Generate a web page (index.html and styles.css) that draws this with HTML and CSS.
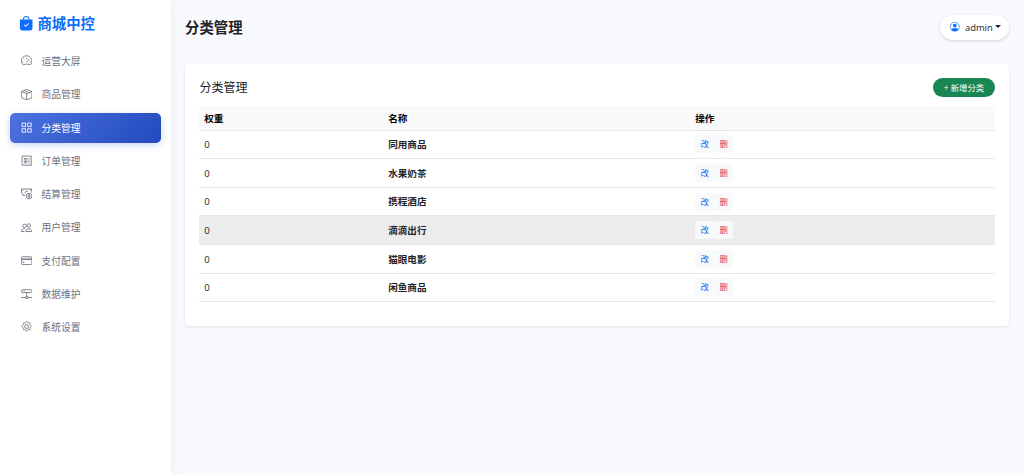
FILE: index.html
```html
<!DOCTYPE html>
<html lang="zh-CN">
<head>
    <meta charset="UTF-8">
    <meta name="viewport" content="width=device-width, initial-scale=1.0">
    <title>分类管理</title>
    <link rel="stylesheet" href="styles.css">
</head>
<body>
    <nav class="sidebar">
        <div class="brand">
            <svg class="brand-icon" viewBox="0 0 16 16" fill="currentColor"><path fill-rule="evenodd" d="M10.5 3.5a2.5 2.5 0 0 0-5 0V4h5v-.5zm1 0V4H15v10a2 2 0 0 1-2 2H3a2 2 0 0 1-2-2V4h3.500v-.5a3.500 3.500 0 1 1 7 0zm-.646 5.354a.5.5 0 0 0-.708-.708L7.500 10.793 6.354 9.646a.5.5 0 1 0-.708.708l1.500 1.500a.5.5 0 0 0 .708 0l3-3z"/></svg>
            <span>商城中控</span>
        </div>
        <a class="nav-link" href="#">
            <svg class="icon" viewBox="0 0 16 16"><path d="M2.300 13.400a7.500 7.500 0 1 1 11.400 0c-.5.600-1.200.400-2 .1-2.400-.8-5-.8-7.400 0-.8.300-1.500.500-2-.1zM8 4v2M3.700 5.700l1 1M2 10h1.600M12.400 10H14M7.700 10.200l4.200-4.500"/></svg>
            <span>运营大屏</span>
        </a>
        <a class="nav-link" href="#">
            <svg class="icon" viewBox="0 0 16 16"><path d="M8 .6l7.500 3v8.800L8 15.400l-7.500-3V3.600zM.5 3.600L8 6.600l7.500-3M8 6.600v8.800M4.200 2.100l7.500 3"/></svg>
            <span>商品管理</span>
        </a>
        <a class="nav-link active" href="#">
            <svg class="icon" viewBox="0 0 16 16"><path d="M1.500 1.500h5v5h-5zM9.500 1.500h5v5h-5zM1.500 9.500h5v5h-5zM9.500 9.500h5v5h-5z"/></svg>
            <span>分类管理</span>
        </a>
        <a class="nav-link" href="#">
            <svg class="icon" viewBox="0 0 16 16"><path d="M1.500 1.500h13v13h-13zM4 5h5M4 7h5M4 9h5M4 11h5M10.500 5h1.500M10.500 7h1.500M10.500 9h1.500M10.500 11h1.500"/></svg>
            <span>订单管理</span>
        </a>
        <a class="nav-link" href="#">
            <svg class="icon" viewBox="0 0 16 16"><path d="M6 10.500H2.500V9a2 2 0 0 0-2-2V1.500h15V7M.5 4a2 2 0 0 0 2-2M13.500 2a2 2 0 0 0 2 2M9.700 5.300A2 2 0 1 0 6.300 7.500"/><circle cx="11.500" cy="11.500" r="4"/><path d="M12.800 10.200c-.4-1-2.500-.8-2.500.2s2.600.8 2.600 2c0 1.100-2.400 1.200-2.800.1M11.500 8.800v5.400"/></svg>
            <span>结算管理</span>
        </a>
        <a class="nav-link" href="#">
            <svg class="icon" viewBox="0 0 16 16"><circle cx="11" cy="5" r="2.500"/><circle cx="5" cy="5.500" r="2.500"/><path d="M6.500 13.500c0-2 1.500-4 4.500-4s4.500 2 4.500 4zM5.500 9.500c-3 0-5 1.500-5 4h4"/></svg>
            <span>用户管理</span>
        </a>
        <a class="nav-link" href="#">
            <svg class="icon" viewBox="0 0 16 16"><rect x=".5" y="2.500" width="15" height="11" rx="1.500"/><path d="M.5 5.500h15M.5 6.500h15"/><path d="M2.500 10h2M2.500 10.800h2"/></svg>
            <span>支付配置</span>
        </a>
        <a class="nav-link" href="#">
            <svg class="icon" viewBox="0 0 16 16"><rect x=".5" y="2.500" width="15" height="4" rx="1.500"/><path d="M2.500 4.500h1M4.800 4.500h1M8 6.500V12M0 13.500h6.500M9.500 13.500H16"/><rect x="6.500" y="12" width="3" height="3" rx=".5"/></svg>
            <span>数据维护</span>
        </a>
        <a class="nav-link" href="#">
            <svg class="icon" viewBox="0 0 16 16"><circle cx="8" cy="8" r="2.700"/><path d="M6.900 1.600c.3-1.100 1.900-1.100 2.200 0 .2.900 1.200 1.300 2 .8 1-.5 2.100.6 1.600 1.600-.5.800-.1 1.800.8 2.100 1.300.5 1.300 2.300 0 2.800-.9.300-1.300 1.300-.8 2.100.5 1-.6 2.100-1.600 1.600-.8-.5-1.800-.1-2 .8-.3 1.300-1.900 1.300-2.200 0-.2-.9-1.200-1.300-2-.8-1 .5-2.100-.6-1.600-1.600.5-.8.1-1.800-.8-2.100-1.300-.5-1.300-2.300 0-2.800.9-.3 1.300-1.300.8-2.100-.5-1 .6-2.100 1.600-1.600.8.500 1.800.1 2-.8z"/></svg>
            <span>系统设置</span>
        </a>
    </nav>

    <main class="content">
        <header class="topbar">
            <h1>分类管理</h1>
            <button class="user-menu">
                <svg class="user-icon" viewBox="0 0 16 16" fill="currentColor"><path d="M11 6a3 3 0 1 1-6 0 3 3 0 0 1 6 0z"/><path fill-rule="evenodd" d="M0 8a8 8 0 1 1 16 0A8 8 0 0 1 0 8zm8-7a7 7 0 0 0-5.468 11.370C3.242 11.226 4.805 10 8 10s4.757 1.225 5.468 2.370A7 7 0 0 0 8 1z"/></svg>
                <span>admin</span>
                <span class="caret"></span>
            </button>
        </header>

        <section class="card">
            <div class="card-head">
                <h2>分类管理</h2>
                <button class="btn-add">+ 新增分类</button>
            </div>
            <table>
                <thead>
                    <tr><th class="col-weight">权重</th><th class="col-name">名称</th><th>操作</th></tr>
                </thead>
                <tbody>
                    <tr><td>0</td><td class="name">同用商品</td><td class="ops"><div class="actions"><button class="edit">改</button><button class="delete">删</button></div></td></tr>
                    <tr><td>0</td><td class="name">水果奶茶</td><td class="ops"><div class="actions"><button class="edit">改</button><button class="delete">删</button></div></td></tr>
                    <tr><td>0</td><td class="name">携程酒店</td><td class="ops"><div class="actions"><button class="edit">改</button><button class="delete">删</button></div></td></tr>
                    <tr class="hovered"><td>0</td><td class="name">滴滴出行</td><td class="ops"><div class="actions"><button class="edit">改</button><button class="delete">删</button></div></td></tr>
                    <tr><td>0</td><td class="name">猫眼电影</td><td class="ops"><div class="actions"><button class="edit">改</button><button class="delete">删</button></div></td></tr>
                    <tr><td>0</td><td class="name">闲鱼商品</td><td class="ops"><div class="actions"><button class="edit">改</button><button class="delete">删</button></div></td></tr>
                </tbody>
            </table>
        </section>
    </main>
</body>
</html>
```
FILE: styles.css
```css
* {
    box-sizing: border-box;
}
body {
    margin: 0;
    display: flex;
    height: 100vh;
    background-color: #f8f9fc;
    color: #212529;
    font-family: "Open Sans", "Noto Sans CJK SC", sans-serif;
    font-size: 9.6px;
    line-height: 1.5;
}
button {
    font-family: inherit;
    border: none;
    cursor: pointer;
}
.sidebar {
    width: 171px;
    flex: none;
    padding: 13px 10px 0;
    background-color: #fff;
    box-shadow: 0 0 10px rgba(58,59,69,0.08);
}
.brand {
    display: flex;
    align-items: center;
    gap: 4px;
    height: 22px;
    margin-bottom: 11.5px;
    padding-left: 9px;
    color: #0d6efd;
    font-size: 14.4px;
    font-weight: 700;
}
.brand-icon {
    width: 14.4px;
    height: 14.4px;
    margin-bottom: 1px;
}
.nav-link {
    display: flex;
    align-items: center;
    gap: 9px;
    height: 30px;
    margin-bottom: 3.25px;
    padding-left: 11.2px;
    border-radius: 5px;
    color: #6e707e;
    font-size: 9.75px;
    text-decoration: none;
}
.nav-link span {
    padding-top: 2px;
}
.nav-link.active {
    background: linear-gradient(135deg, #4e73df 0%, #224abe 100%);
    box-shadow: 0 2px 6px rgba(78,115,223,0.3);
    color: #fff;
}
.icon {
    width: 11.3px;
    height: 11.3px;
    margin-bottom: 1px;
    fill: none;
    stroke: currentColor;
    stroke-width: 1.2;
}
.content {
    flex: 1;
    padding: 14px 14.6px 0 14px;
}
.topbar {
    display: flex;
    justify-content: space-between;
    align-items: center;
    height: 26px;
    margin-bottom: 24px;
}
h1 {
    margin: 0;
    padding-top: 2px;
    font-size: 14.4px;
    font-weight: 700;
}
.user-menu {
    display: flex;
    align-items: center;
    width: 69px;
    height: 25px;
    padding: 0 10px;
    border-radius: 13px;
    background-color: #fff;
    box-shadow: 0 1px 3px rgba(0,0,0,0.16);
    color: #212529;
    font-size: 9.4px;
}
.user-icon {
    width: 9.6px;
    height: 9.6px;
    margin-right: 5px;
    color: #0d6efd;
    flex: none;
}
.caret {
    margin-left: 2.5px;
    margin-bottom: 2px;
    border-top: 3px solid;
    border-left: 3px solid transparent;
    border-right: 3px solid transparent;
}
.card {
    height: 262px;
    padding: 14px 14.4px;
    border-radius: 4px;
    background-color: #fff;
    box-shadow: 0 1px 3px rgba(0,0,0,0.1);
}
.card-head {
    display: flex;
    justify-content: space-between;
    align-items: center;
    height: 19px;
    margin-bottom: 9px;
}
h2 {
    margin: 0;
    font-size: 12px;
    font-weight: 400;
}
.btn-add {
    width: 62px;
    height: 19px;
    padding: 0 0 1px;
    border-radius: 10px;
    background-color: #198754;
    color: #fff;
    font-size: 8.4px;
}
table {
    width: 100%;
    border-collapse: separate;
    border-spacing: 0;
    table-layout: fixed;
}
th,
td {
    height: 28.6px;
    padding: 2px 4.8px 0;
    border-bottom: 1px solid #e5e7e9;
    text-align: left;
    vertical-align: middle;
}
th {
    height: 24.6px;
    background-color: #f8f9fa;
    color: #000;
    font-weight: 700;
}
.col-weight {
    width: 184px;
}
.col-name {
    width: 307px;
}
.name {
    font-weight: 700;
}
.ops {
    padding-top: 0;
}
.hovered td {
    background-color: #ececec;
}
.actions {
    display: flex;
}
.actions button {
    width: 19px;
    height: 18px;
    padding: 0 0 2px;
    border-radius: 2.4px;
    background-color: #f8f9fa;
    font-size: 8.4px;
}
.actions .edit {
    color: #0d6efd;
}
.actions .delete {
    color: #dc3545;
}
```
